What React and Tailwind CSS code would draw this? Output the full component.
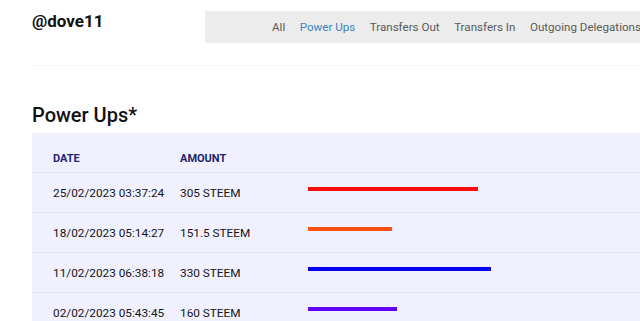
import React from "react";

const rows = [
  { date: "25/02/2023 03:37:24", amount: "305 STEEM", v: 305, color: "#ff0a0a" },
  { date: "18/02/2023 05:14:27", amount: "151.5 STEEM", v: 151.5, color: "#ff5014" },
  { date: "11/02/2023 06:38:18", amount: "330 STEEM", v: 330, color: "#0000f5" },
  { date: "02/02/2023 05:43:45", amount: "160 STEEM", v: 160, color: "#6000ff" },
];

export default function App() {
  return (
    <div className="w-[640px] h-[321px] overflow-hidden bg-white font-['Roboto',sans-serif]">
      <div className="pl-8">
        <div className="flex items-start pt-[11px] pb-[22px] border-b border-[#f4f4f4]">
          <div className="w-[173px] shrink-0 text-[17px] font-bold leading-[20px] text-[#111]">@dove11</div>
          <nav className="flex-1 h-[32px] bg-[#ececec] flex items-center pt-[2px] pl-[67px] gap-[14.5px] text-[11.6px] text-[#5a5a5a] whitespace-nowrap overflow-hidden">
            <span>All</span>
            <span className="text-[#3a85c6]">Power Ups</span>
            <span>Transfers Out</span>
            <span>Transfers In</span>
            <span>Outgoing Delegations</span>
          </nav>
        </div>
        <h2 className="mt-[37px] mb-[6px] text-[20px] leading-[24px] font-medium text-[#111]">Power Ups*</h2>
        <div className="bg-[#f0f0fe]">
          <div className="grid grid-cols-[127px_128px_1fr] pl-[21px] h-[40px] pt-[18px] text-[11px] leading-[16px] font-bold text-[#1d2470] border-b border-[#dfe6fb]">
            <div>DATE</div>
            <div>AMOUNT</div>
            <div></div>
          </div>
          {rows.map((r) => (
            <div key={r.date} className="grid grid-cols-[127px_128px_1fr] pl-[21px] h-[40px] pt-[3px] text-[11.8px] text-[#151515] border-b border-[#dfe6fb]">
              <div className="flex items-center">{r.date}</div>
              <div className="flex items-center">{r.amount}</div>
              <div className="pt-[11px]">
                <div className="h-[4px]" style={{ width: `${r.v * 0.556}px`, backgroundColor: r.color }} />
              </div>
            </div>
          ))}
        </div>
      </div>
    </div>
  );
}
